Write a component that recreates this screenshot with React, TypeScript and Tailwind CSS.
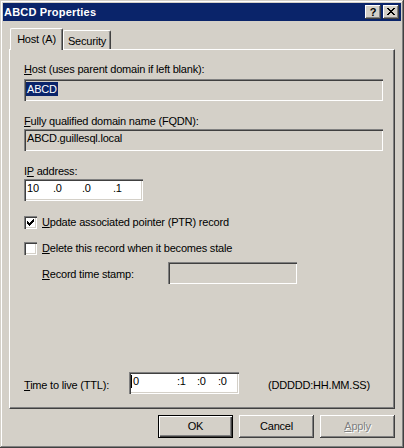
import React from "react";

const sunken =
  "shadow-[inset_1px_1px_0_#808080,inset_2px_2px_0_#404040,inset_-1px_-1px_0_#ffffff,inset_-2px_-2px_0_#d4d0c8]";
const raised =
  "shadow-[inset_-1px_-1px_0_#404040,inset_1px_1px_0_#ffffff,inset_-2px_-2px_0_#808080]";
const raisedDefault =
  "shadow-[inset_0_0_0_1px_#000000,inset_2px_2px_0_#ffffff,inset_-2px_-2px_0_#404040,inset_-3px_-3px_0_#808080]";

function U({ children }: { children: React.ReactNode }) {
  return <span className="underline underline-offset-1 decoration-1">{children}</span>;
}

function Checkbox({ checked }: { checked?: boolean }) {
  return (
    <div className={`relative w-[13px] h-[13px] shrink-0 bg-white ${sunken}`}>
      {checked && (
        <svg
          width="13"
          height="13"
          viewBox="0 0 13 13"
          shapeRendering="crispEdges"
          className="absolute left-0 top-0"
        >
          <path
            d="M9 3h1v1h-1z M8 4h2v1h-2z M3 5h1v1h-1z M7 5h3v1h-3z M3 6h2v1h-2z M6 6h3v1h-3z M3 7h5v1h-5z M4 8h3v1h-3z M5 9h1v1h-1z"
            fill="#000"
          />
        </svg>
      )}
    </div>
  );
}

export default function App() {
  return (
    <div className="w-[404px] h-[448px] bg-[#d4d0c8] flex flex-col font-['Liberation_Sans',Arial,sans-serif] text-[11px] leading-[13px] tracking-[-0.2px] text-black select-none shadow-[inset_-1px_-1px_0_#404040,inset_1px_1px_0_#d4d0c8,inset_-2px_-2px_0_#808080,inset_2px_2px_0_#ffffff]">
      {/* Title bar */}
      <div className="mx-[3px] mt-[3px] h-[18px] bg-[#0a246a] flex items-start">
        <div className="flex-1 pl-[1px] pt-[3px] text-white font-bold tracking-[0.2px]">
          ABCD Properties
        </div>
        <div className="flex pt-[2px] pr-[2px] gap-[2px]">
          <div
            className={`w-[16px] h-[14px] bg-[#d4d0c8] ${raised} flex items-center justify-center font-bold text-[11px] leading-none tracking-normal`}
          >
            ?
          </div>
          <div className={`relative w-[16px] h-[14px] bg-[#d4d0c8] ${raised}`}>
            <svg
              width="8"
              height="7"
              viewBox="0 0 8 7"
              shapeRendering="crispEdges"
              className="absolute left-[4px] top-[3px]"
            >
              <path
                d="M0 0h2v1h-2z M6 0h2v1h-2z M1 1h2v1h-2z M5 1h2v1h-2z M2 2h4v1h-4z M3 3h2v1h-2z M2 4h4v1h-4z M1 5h2v1h-2z M5 5h2v1h-2z M0 6h2v1h-2z M6 6h2v1h-2z"
                fill="#000"
              />
            </svg>
          </div>
        </div>
      </div>

      <div className="flex flex-col px-[9px]">
        {/* Tabs */}
        <div className="mt-[7px] h-[21px] flex items-end pl-[1px]">
          <div className="relative z-10 -mb-[1px] w-[53px] h-[22px] bg-[#d4d0c8] border-l border-t border-r border-l-white border-t-white border-r-[#404040] shadow-[inset_-1px_0_0_#808080] rounded-t-[2px] pt-[4px] text-center">
            Host (A)
          </div>
          <div className="w-[48px] h-[19px] bg-[#d4d0c8] border-l border-t border-r border-l-white border-t-white border-r-[#404040] shadow-[inset_-1px_0_0_#808080] rounded-t-[2px] pt-[4px] text-center">
            Security
          </div>
        </div>

        {/* Panel */}
        <div className="h-[360px] flex flex-col border border-t-white border-l-white border-r-[#404040] border-b-[#404040] shadow-[inset_-1px_-1px_0_#808080] pt-[13px] pl-[14px] pr-[11px] pb-[14px]">
          <div>
            <U>H</U>ost (uses parent domain if left blank):
          </div>
          <div className={`mt-[3px] h-[22px] ${sunken} pl-[2px] pt-[3px]`}>
            <span className="inline-block bg-[#0a246a] text-white leading-[14px] px-[1px]">ABCD</span>
          </div>

          <div className="mt-[14px]">
            <U>F</U>ully qualified domain name (FQDN):
          </div>
          <div className={`mt-[1px] h-[22px] ${sunken} pl-[3px] pt-[3px]`}>ABCD.guillesql.local</div>

          <div className="mt-[14px]">
            I<U>P</U> address:
          </div>
          <div className={`mt-[1px] w-[119px] h-[22px] bg-white ${sunken} pl-[3px] pt-[3px] flex`}>
            <span className="w-[26px]">10</span>
            <span className="w-[29px]">.0</span>
            <span className="w-[31px]">.0</span>
            <span>.1</span>
          </div>

          <div className="mt-[15px] h-[13px] flex items-center">
            <Checkbox checked />
            <span className="ml-[5px]">
              <U>U</U>pdate associated pointer (PTR) record
            </span>
          </div>
          <div className="mt-[13px] h-[13px] flex items-center">
            <Checkbox />
            <span className="ml-[5px]">
              <U>D</U>elete this record when it becomes stale
            </span>
          </div>

          <div className="mt-[7px] h-[22px] flex items-start">
            <div className="ml-[18px] w-[126px] pt-[6px]">
              <U>R</U>ecord time stamp:
            </div>
            <div className={`w-[129px] h-[22px] ${sunken}`}></div>
          </div>

          <div className="mt-auto h-[22px] flex items-start">
            <div className="w-[105px] pt-[7px]">
              <U>T</U>ime to live (TTL):
            </div>
            <div className={`w-[110px] h-[22px] bg-white ${sunken} pl-[2px] pt-[3px] flex items-start`}>
              <span className="w-[1px] h-[13px] bg-black mr-[1px]"></span>
              <span className="w-[44px]">0</span>
              <span className="w-[20px]">:1</span>
              <span className="w-[21px]">:0</span>
              <span>:0</span>
            </div>
            <div className="ml-[29px] pt-[7px]">(DDDDD:HH.MM.SS)</div>
          </div>
        </div>

        {/* Buttons */}
        <div className="mt-[6px] flex justify-end gap-[6px]">
          <div className={`w-[75px] h-[23px] flex items-center justify-center ${raisedDefault}`}>OK</div>
          <div className={`w-[75px] h-[23px] flex items-center justify-center ${raised}`}>Cancel</div>
          <div
            className={`w-[75px] h-[23px] flex items-center justify-center ${raised} text-[#808080] [text-shadow:1px_1px_0_#ffffff]`}
          >
            <span>
              <U>A</U>pply
            </span>
          </div>
        </div>
      </div>
    </div>
  );
}
